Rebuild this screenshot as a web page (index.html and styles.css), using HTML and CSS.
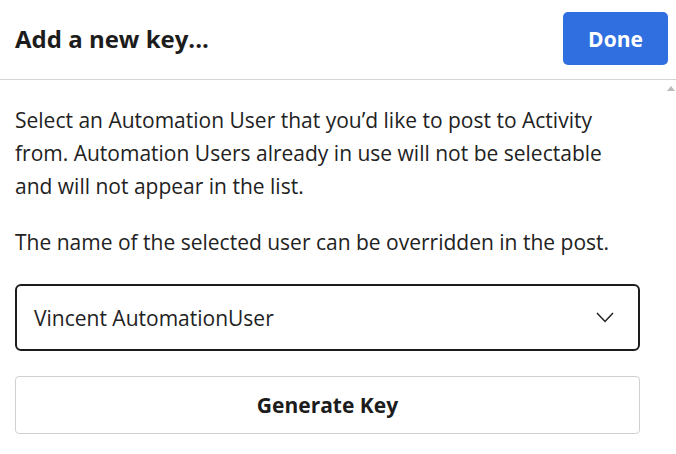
FILE: index.html
```html
<!DOCTYPE html>
<html>
<head>
  <meta charset="UTF-8">
  <title>Add a new key</title>
  <link rel="stylesheet" href="styles.css">
</head>
<body>
  <div class="header">
    <h2>Add a new key...</h2>
    <button type="button" class="done">Done</button>
  </div>
  <div class="content">
    <span class="scroll-up"></span>
    <p>Select an Automation User that you’d like to post to Activity from. Automation Users already in use will not be selectable and will not appear in the list.</p>
    <p>The name of the selected user can be overridden in the post.</p>
    <div class="select">
      <span>Vincent AutomationUser</span>
      <svg width="18" height="11" viewBox="0 0 18 11"><path d="M1 1 L9 9.5 L17 1" fill="none" stroke="#222" stroke-width="1.5"/></svg>
    </div>
    <button type="button" class="generate">Generate Key</button>
  </div>
</body>
</html>
```

FILE: styles.css
```css
body {
  margin: 0;
  font-family: "Open Sans", sans-serif;
  color: #222;
  background: white;
}
.header {
  display: flex;
  align-items: center;
  justify-content: space-between;
  height: 79px;
  padding: 0 8px 0 15px;
  border-bottom: 1px solid #d4d4d4;
}
.header h2 {
  margin: 0 0 2px;
  font-size: 24px;
  font-weight: bold;
  color: #1c1c1c;
}
.done {
  width: 105px;
  height: 53px;
  margin-bottom: 2px;
  background-color: #2f6fe0;
  color: white;
  border: none;
  border-radius: 5px;
  font-family: inherit;
  font-size: 21px;
  font-weight: bold;
}
.content {
  position: relative;
  padding: 24px 36px 0 15px;
}
.scroll-up {
  position: absolute;
  right: 1px;
  top: 6px;
  width: 0;
  height: 0;
  border-left: 4px solid transparent;
  border-right: 4px solid transparent;
  border-bottom: 5px solid #bbb;
}
p {
  max-width: 610px;
  margin: 0;
  font-size: 21px;
  line-height: 33px;
}
p + p {
  margin-top: 23px;
}
.select {
  display: flex;
  align-items: center;
  justify-content: space-between;
  height: 63px;
  margin-top: 25px;
  padding: 0 24px 0 17px;
  border: 2px solid #1c1c1c;
  border-radius: 6px;
  font-size: 21px;
}
.generate {
  display: block;
  width: 100%;
  height: 58px;
  margin-top: 25px;
  background: white;
  border: 1px solid #d0d0d0;
  border-radius: 4px;
  font-family: inherit;
  font-size: 21px;
  font-weight: bold;
  color: #1c1c1c;
}
```
